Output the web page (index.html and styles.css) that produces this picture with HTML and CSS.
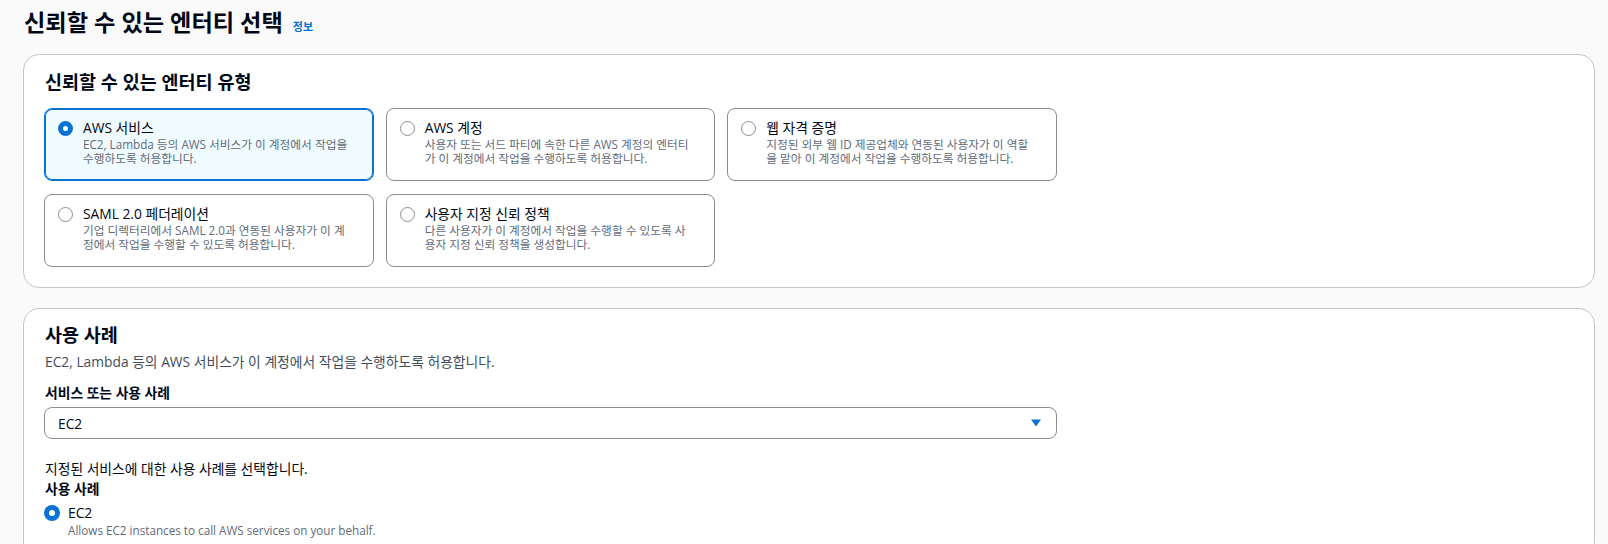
FILE: index.html
```html
<!DOCTYPE html>
<html lang="ko">
<head>
  <meta charset="UTF-8" />
  <meta name="viewport" content="width=device-width, initial-scale=1.0"/>
  <title>신뢰할 수 있는 엔터티 선택</title>
  <link rel="stylesheet" href="styles.css">
</head>
<body>

  <div class="page">
    <h1>신뢰할 수 있는 엔터티 선택 <a class="info" href="#">정보</a></h1>

    <!-- Trusted entity type -->
    <section class="card">
      <h2>신뢰할 수 있는 엔터티 유형</h2>
      <div class="form">
        <div class="tiles">
          <label class="tile selected">
            <span class="radio checked"></span>
            <span class="tile-text">
              <span class="tile-label">AWS 서비스</span>
              <span class="tile-desc">EC2, Lambda 등의 AWS 서비스가 이 계정에서 작업을<br>수행하도록 허용합니다.</span>
            </span>
          </label>
          <label class="tile">
            <span class="radio"></span>
            <span class="tile-text">
              <span class="tile-label">AWS 계정</span>
              <span class="tile-desc">사용자 또는 서드 파티에 속한 다른 AWS 계정의 엔터티<br>가 이 계정에서 작업을 수행하도록 허용합니다.</span>
            </span>
          </label>
          <label class="tile">
            <span class="radio"></span>
            <span class="tile-text">
              <span class="tile-label">웹 자격 증명</span>
              <span class="tile-desc">지정된 외부 웹 ID 제공업체와 연동된 사용자가 이 역할<br>을 맡아 이 계정에서 작업을 수행하도록 허용합니다.</span>
            </span>
          </label>
          <label class="tile">
            <span class="radio"></span>
            <span class="tile-text">
              <span class="tile-label">SAML 2.0 페더레이션</span>
              <span class="tile-desc">기업 디렉터리에서 SAML 2.0과 연동된 사용자가 이 계<br>정에서 작업을 수행할 수 있도록 허용합니다.</span>
            </span>
          </label>
          <label class="tile">
            <span class="radio"></span>
            <span class="tile-text">
              <span class="tile-label">사용자 지정 신뢰 정책</span>
              <span class="tile-desc">다른 사용자가 이 계정에서 작업을 수행할 수 있도록 사<br>용자 지정 신뢰 정책을 생성합니다.</span>
            </span>
          </label>
        </div>
      </div>
    </section>

    <!-- Use case -->
    <section class="card use-case">
      <h2>사용 사례</h2>
      <p class="card-desc">EC2, Lambda 등의 AWS 서비스가 이 계정에서 작업을 수행하도록 허용합니다.</p>
      <div class="form">
        <div class="field-label">서비스 또는 사용 사례</div>
        <div class="select">
          <span>EC2</span>
          <svg class="caret" width="10" height="8" viewBox="0 0 10 8"><path d="M0 0.5 L10 0.5 L5 7.5 Z" fill="#0972d3"/></svg>
        </div>
        <p class="hint">지정된 서비스에 대한 사용 사례를 선택합니다.</p>
        <div class="field-label plain">사용 사례</div>
        <label class="option">
          <span class="radio checked"></span>
          <span class="tile-text">
            <span class="tile-label">EC2</span>
            <span class="tile-desc">Allows EC2 instances to call AWS services on your behalf.</span>
          </span>
        </label>
      </div>
    </section>
  </div>

</body>
</html>
```

FILE: styles.css
```css
body {
  font-family: "Open Sans", "Noto Sans CJK KR", sans-serif;
  background-color: #fafafa;
  color: #000716;
  margin: 0;
  padding: 0;
}

.page {
  padding: 8px 13px 0 23px;
}

h1 {
  font-size: 23.2px;
  line-height: 28px;
  font-weight: bold;
  margin: 0 0 18px 1px;
}

.info {
  font-size: 11px;
  line-height: 1;
  color: #0972d3;
  text-decoration: none;
  font-weight: bold;
  margin-left: 4px;
}

.card {
  background-color: #fff;
  border: 1px solid #c6c6cd;
  border-radius: 16px;
  padding: 16px 20px 20px 20px;
  margin-bottom: 20px;
}

.card.use-case {
  padding-top: 15px;
}

h2 {
  font-size: 18.5px;
  line-height: 22px;
  font-weight: bold;
  margin: 0 0 15px 1px;
}

.card-desc {
  font-size: 13.8px;
  line-height: 18px;
  color: #414d5c;
  margin: -8px 0 0 1px;
}

.form {
  max-width: 1013px;
}

.tiles {
  display: grid;
  grid-template-columns: repeat(3, 1fr);
  gap: 13px 12px;
}

.tile {
  display: flex;
  align-items: flex-start;
  border: 1px solid #8c8c94;
  border-radius: 8px;
  padding: 10px 12px 14px 12px;
  height: 73px;
  box-sizing: border-box;
  cursor: pointer;
}

.tile.selected {
  border-color: #0972d3;
  box-shadow: inset 0 0 0 1px #0972d3;
  background-color: #f0fbff;
}

.radio {
  flex: none;
  width: 15px;
  height: 15px;
  box-sizing: border-box;
  border: 1.5px solid #8c8c94;
  border-radius: 50%;
  background: #fff;
  margin: 2px 10px 0 1px;
}

.radio.checked {
  border: 5px solid #0972d3;
}

.tile-text {
  display: flex;
  flex-direction: column;
}

.tile-label {
  font-size: 13.8px;
  line-height: 18px;
  white-space: nowrap;
}

.tile-desc {
  font-size: 11.7px;
  line-height: 14px;
  color: #5f6b7a;
  white-space: nowrap;
}

.field-label {
  font-size: 13.8px;
  line-height: 18px;
  font-weight: bold;
  margin: 13px 0 5px 1px;
}

.field-label.plain {
  margin-top: 2px;
}

.select {
  display: flex;
  justify-content: space-between;
  align-items: center;
  height: 32px;
  box-sizing: border-box;
  border: 1px solid #8c8c94;
  border-radius: 8px;
  padding: 0 15px 0 13px;
  font-size: 13.8px;
}

.hint {
  font-size: 13.8px;
  line-height: 18px;
  margin: 21px 0 0 1px;
}

.option {
  display: flex;
  align-items: flex-start;
  margin-top: 6px;
}

.option .radio {
  width: 16px;
  height: 16px;
  margin: 1px 8px 0 0;
}

.option .tile-desc {
  line-height: 16px;
}
```
